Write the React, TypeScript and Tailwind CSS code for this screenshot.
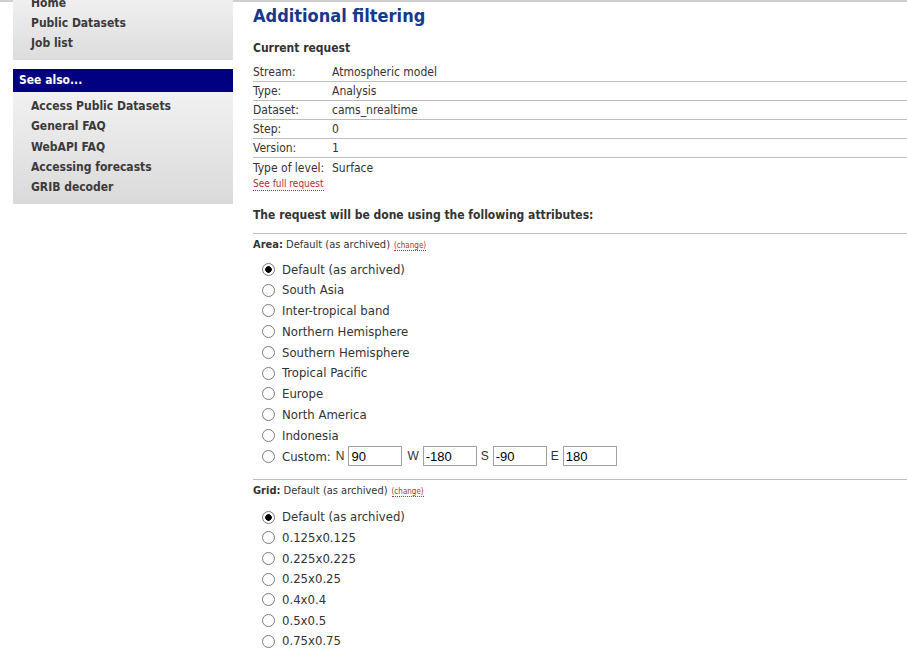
import React from "react";

const font = { fontFamily: '"DejaVu Sans Condensed", "DejaVu Sans", sans-serif' };
const arial = { fontFamily: '"Liberation Sans", sans-serif' };

const menuTop = ["Home", "Public Datasets", "Job list"];
const seeAlso = ["Access Public Datasets", "General FAQ", "WebAPI FAQ", "Accessing forecasts", "GRIB decoder"];

const request = [
  ["Stream:", "Atmospheric model"],
  ["Type:", "Analysis"],
  ["Dataset:", "cams_nrealtime"],
  ["Step:", "0"],
  ["Version:", "1"],
  ["Type of level:", "Surface"],
];

const areas = [
  "Default (as archived)",
  "South Asia",
  "Inter-tropical band",
  "Northern Hemisphere",
  "Southern Hemisphere",
  "Tropical Pacific",
  "Europe",
  "North America",
  "Indonesia",
];

const grids = ["Default (as archived)", "0.125x0.125", "0.225x0.225", "0.25x0.25", "0.4x0.4", "0.5x0.5", "0.75x0.75"];

function Radio({ name, checked }: { name: string; checked?: boolean }) {
  return (
    <input
      type="radio"
      name={name}
      defaultChecked={checked}
      className="appearance-none w-[13px] h-[13px] rounded-full border border-[#7a7a7a] bg-white checked:bg-[radial-gradient(circle,#000_3px,#fff_3.5px)] m-0 shrink-0"
    />
  );
}

function Change() {
  return (
    <a href="#" className="ml-1 text-[8px] text-[#b03030] border-b border-dotted border-[#b03030]">
      (change)
    </a>
  );
}

function Field({ value }: { value: string }) {
  return (
    <input
      defaultValue={value}
      className="w-[54px] h-[20px] border border-[#a0a0a0] px-[2px] text-[13px] text-black outline-none"
      style={arial}
    />
  );
}

export default function App() {
  return (
    <div className="min-h-screen bg-white text-[#333] text-[12px] overflow-hidden" style={font}>
      <div className="h-[2px] bg-[#cfcfcf]" />
      <div className="flex">
        {/* SIDEBAR */}
        <div className="ml-[13px] w-[220px] shrink-0">
          <div className="mt-[-11px] pt-[2px] pb-[7px] bg-linear-to-b from-[#f3f3f3] to-[#dcdcdc]">
            {menuTop.map((m) => (
              <div key={m} className="h-[20px] leading-[20px] pl-[18px] font-bold text-[#3a3a3a]">
                {m}
              </div>
            ))}
          </div>
          <div className="mt-[9px] h-[23px] leading-[23px] pl-[6px] bg-[#000080] text-white font-bold">See also...</div>
          <div className="pt-[4px] pb-[7px] bg-linear-to-b from-[#f1f1f1] to-[#dadada]">
            {seeAlso.map((m) => (
              <div key={m} className="h-[20.3px] leading-[20px] pl-[18px] font-bold text-[#3a3a3a]">
                {m}
              </div>
            ))}
          </div>
        </div>

        {/* MAIN */}
        <div className="ml-[20px] flex-1">
          <h1 className="text-[18px] font-bold text-[#16388e] leading-[26px] mt-[1px]">Additional filtering</h1>
          <h2 className="font-bold mt-[11px] leading-[16px]">Current request</h2>
          <div className="mt-[7px]">
            {request.map(([k, v], i) => (
              <div
                key={k}
                className={`flex h-[19px] items-center ${i < request.length - 1 ? "border-b border-[#bdbdbd]" : ""}`}
              >
                <span className="w-[79px]">{k}</span>
                <span>{v}</span>
              </div>
            ))}
          </div>
          <a href="#" className="block w-fit text-[10px] text-[#b03030] border-b border-dotted border-[#b03030] leading-[12px] mt-[1px]">
            See full request
          </a>

          <h2 className="font-bold mt-[16px] leading-[16px]">The request will be done using the following attributes:</h2>
          <div className="mt-[10px] border-t border-[#bdbdbd]" />
          <div className="mt-[3px] text-[11px] leading-[15px]">
            <b>Area:</b> Default (as archived)
            <Change />
          </div>
          <div className="mt-[6px] text-[13px]">
            {areas.map((a, i) => (
              <label key={a} className="flex items-center h-[20.75px] pl-[9px] gap-[7px]">
                <Radio name="area" checked={i === 0} />
                <span>{a}</span>
              </label>
            ))}
            <div className="flex items-center h-[21px] pl-[9px] gap-[7px]">
              <Radio name="area" />
              <span className="flex items-center gap-[4px]">
                <span className="mr-[1px]">Custom:</span>
                <span className="text-[12px]" style={arial}>N</span>
                <Field value="90" />
                <span className="ml-[1px] text-[12px]" style={arial}>W</span>
                <Field value="-180" />
                <span className="text-[12px]" style={arial}>S</span>
                <Field value="-90" />
                <span className="text-[12px]" style={arial}>E</span>
                <Field value="180" />
              </span>
            </div>
          </div>
          <div className="mt-[12px] border-t border-[#bdbdbd]" />
          <div className="mt-[3px] text-[11px] leading-[15px]">
            <b>Grid:</b> Default (as archived)
            <Change />
          </div>
          <div className="mt-[8px] text-[13px]">
            {grids.map((g, i) => (
              <label key={g} className="flex items-center h-[20.7px] pl-[9px] gap-[7px]">
                <Radio name="grid" checked={i === 0} />
                <span>{g}</span>
              </label>
            ))}
          </div>
        </div>
      </div>
    </div>
  );
}
